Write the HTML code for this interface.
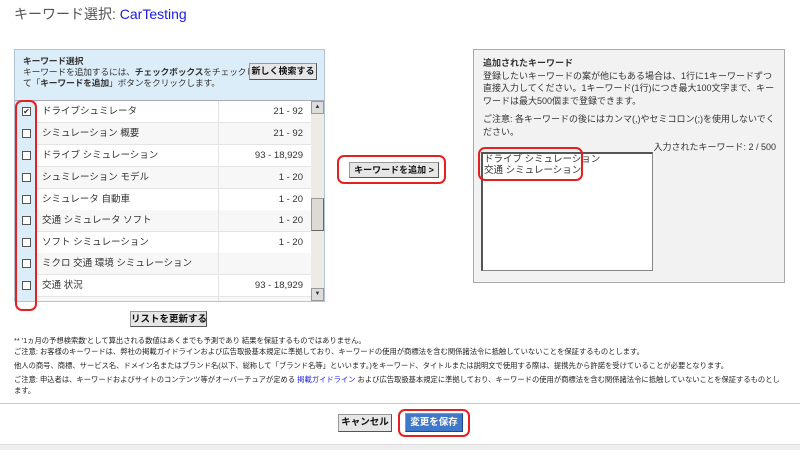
<!DOCTYPE html>
<html><head><meta charset="utf-8"><style>
*{margin:0;padding:0;box-sizing:border-box}
body{width:800px;height:450px;background:#fff;font-family:"Liberation Sans","Noto Sans CJK JP",sans-serif;color:#333;position:relative;overflow:hidden;font-size:10px}
.abs{position:absolute}
.title{left:14px;top:4px;font-size:14px;color:#555}
.title span{color:#1a1ae6}
.lp{left:14px;top:49px;width:311px;height:253px;border:1px solid #b5c4d4;background:#fff}
.lh{left:0;top:0;width:309px;height:51px;background:#dcedfa;border-bottom:1px solid #aab;padding:6px 8px;font-size:8.8px;line-height:11px;color:#333;white-space:nowrap;letter-spacing:-0.2px}
.btn{position:absolute;background:#e6e6e6;border:1px solid #999;border-right-color:#555;border-bottom-color:#555;font-weight:bold;font-size:9.5px;color:#111;text-align:center;line-height:15px;white-space:nowrap;overflow:hidden}
.row{position:absolute;left:0;width:296px;height:22px;border-bottom:1px solid #e4e4e4;font-size:9.5px;line-height:21px;background:#f7f7f7}
.row:nth-child(odd){background:#fff}
.cb{position:absolute;left:0;top:0;width:22px;height:22px;background:#dcedfa}
.cb i{position:absolute;left:7px;top:6px;width:9px;height:9px;border:1px solid #555;background:#fff;font-style:normal;font-size:8px;line-height:7px;text-align:center}
.kw{position:absolute;left:27px}
.num{position:absolute;right:8px}
.sep{position:absolute;left:203px;top:0;width:1px;height:22px;background:#e4e4e4}
.rp{left:473px;top:49px;width:312px;height:234px;border:1px solid #aaa;background:#f2f2f2;padding:7px 9px;font-size:9px;line-height:12.5px;color:#333}
.ta{left:481px;top:152px;width:172px;height:119px;background:#fff;border:1px solid #888;border-left:2px solid #555;border-top:2px solid #555;font-size:9.5px;line-height:11px;padding:0 1px;color:#333}
.red{position:absolute;border:2px solid #e52020;border-radius:7px}
.foot{left:14px;top:335px;font-size:7.3px;line-height:11px;color:#222;width:770px}
.bottom{left:0;top:403px;width:800px;height:47px;border-top:1px solid #ccc;background:#fff}
.gray{left:0;top:444px;width:800px;height:6px;background:#eee;border-top:1px solid #ddd}
</style></head><body>
<div class="abs title">キーワード選択: <span>CarTesting</span></div>

<div class="abs lp">
 <div class="abs lh"><b>キーワード選択</b><br>キーワードを追加するには、<b>チェックボックス</b>をチェックし<br>て「<b>キーワードを追加</b>」ボタンをクリックします。</div>
 <div class="btn" style="left:234px;top:13px;width:68px;height:17px;font-size:9px">新しく検索する</div>
 <div class="abs" style="left:0;top:51px;width:296px;height:200px;overflow:hidden">
  <div class="row" style="top:0"><div class="cb"><i>✔</i></div><span class="kw">ドライブシュミレータ</span><div class="sep"></div><span class="num">21 - 92</span></div>
  <div class="row" style="top:22px"><div class="cb"><i></i></div><span class="kw">シミュレーション 概要</span><div class="sep"></div><span class="num">21 - 92</span></div>
  <div class="row" style="top:44px"><div class="cb"><i></i></div><span class="kw">ドライブ シミュレーション</span><div class="sep"></div><span class="num">93 - 18,929</span></div>
  <div class="row" style="top:66px"><div class="cb"><i></i></div><span class="kw">シュミレーション モデル</span><div class="sep"></div><span class="num">1 - 20</span></div>
  <div class="row" style="top:88px"><div class="cb"><i></i></div><span class="kw">シミュレータ 自動車</span><div class="sep"></div><span class="num">1 - 20</span></div>
  <div class="row" style="top:109px"><div class="cb"><i></i></div><span class="kw">交通 シミュレータ ソフト</span><div class="sep"></div><span class="num">1 - 20</span></div>
  <div class="row" style="top:131px"><div class="cb"><i></i></div><span class="kw">ソフト シミュレーション</span><div class="sep"></div><span class="num">1 - 20</span></div>
  <div class="row" style="top:152px"><div class="cb"><i></i></div><span class="kw">ミクロ 交通 環境 シミュレーション</span><div class="sep"></div><span class="num"></span></div>
  <div class="row" style="top:174px"><div class="cb"><i></i></div><span class="kw">交通 状況</span><div class="sep"></div><span class="num">93 - 18,929</span></div>
  <div class="row" style="top:196px"><div class="cb"><i></i></div><span class="kw">交通シミュレーション</span><div class="sep"></div><span class="num">21 - 92</span></div>
 </div>
 <div class="abs" style="left:296px;top:51px;width:13px;height:200px;background:#ecebe6">
  <div class="abs" style="left:0;top:0;width:13px;height:13px;background:#ddd;border:1px solid #999;font-size:6px;text-align:center;line-height:11px">▲</div>
  <div class="abs" style="left:0;top:97px;width:13px;height:33px;background:#dcdad4;border:1px solid #999;border-right-color:#666;border-bottom-color:#666"></div>
  <div class="abs" style="left:0;top:187px;width:13px;height:13px;background:#ddd;border:1px solid #999;font-size:6px;text-align:center;line-height:11px">▼</div>
 </div>
</div>
<div class="btn" style="left:130px;top:311px;width:77px;height:16px">リストを更新する</div>

<div class="btn" style="left:349px;top:162px;width:90px;height:16px;font-size:9px">キーワードを追加 &gt;</div>

<div class="abs rp"><b>追加されたキーワード</b><br>登録したいキーワードの案が他にもある場合は、1行に1キーワードずつ直接入力してください。1キーワード(1行)につき最大100文字まで、キーワードは最大500個まで登録できます。<div style="height:6px"></div>ご注意: 各キーワードの後にはカンマ(,)やセミコロン(;)を使用しないでください。</div>
<div class="abs" style="left:600px;top:140px;width:176px;text-align:right;font-size:9px;color:#333">入力されたキーワード: 2 / 500</div>
<div class="abs ta">ドライブ シミュレーション<br>交通 シミュレーション</div>

<div class="abs foot">** '1ヵ月の予想検索数'として算出される数値はあくまでも予測であり 結果を保証するものではありません。<br>ご注意: お客様のキーワードは、弊社の掲載ガイドラインおよび広告取扱基本規定に準拠しており、キーワードの使用が商標法を含む関係諸法令に抵触していないことを保証するものとします。<div style="height:3px"></div>他人の商号、商標、サービス名、ドメイン名またはブランド名(以下、総称して「ブランド名等」といいます。)をキーワード、タイトルまたは説明文で使用する際は、提携先から許諾を受けていることが必要となります。<div style="height:3px"></div>ご注意: 申込者は、キーワードおよびサイトのコンテンツ等がオーバーチュアが定める <span style="color:#1a1ae6">掲載ガイドライン</span> および広告取扱基本規定に準拠しており、キーワードの使用が商標法を含む関係諸法令に抵触していないことを保証するものとします。</div>

<div class="abs bottom"></div>
<div class="btn" style="left:338px;top:414px;width:54px;height:18px;line-height:16px">キャンセル</div>
<div class="btn" style="left:405px;top:413px;width:58px;height:19px;line-height:17px;background:#3f78c8;color:#fff;border-color:#6a9ae0 #1d4a8c #1d4a8c #6a9ae0">変更を保存</div>
<div class="abs gray"></div>

<div class="red" style="left:15px;top:100px;width:22px;height:211px"></div>
<div class="red" style="left:337px;top:155px;width:109px;height:29px"></div>
<div class="red" style="left:478px;top:147px;width:105px;height:34px"></div>
<div class="red" style="left:398px;top:409px;width:72px;height:28px"></div>
</body></html>
